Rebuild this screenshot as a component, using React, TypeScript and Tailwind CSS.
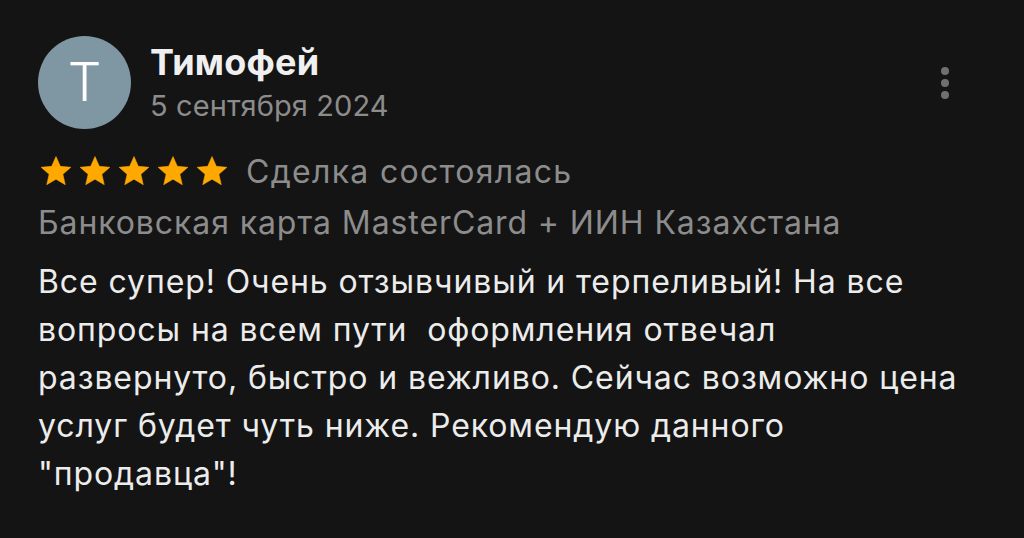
import React from "react";

const Star = () => (
  <svg width="34" height="34" viewBox="0 0 24 24" className="shrink-0">
    <path
      d="M12 1.8l3.05 6.9 7.45.68-5.64 4.95 1.67 7.33L12 17.8l-6.53 3.86 1.67-7.33L1.5 9.38l7.45-.68z"
      fill="#ffa900"
      stroke="#ffa900"
      strokeWidth="0.4"
      strokeLinejoin="round"
    />
  </svg>
);

export default function App() {
  return (
    <div
      className="w-[1024px] h-[538px] bg-[#141414] overflow-hidden pl-[38px] pr-[75px] pt-[36px]"
      style={{ fontFamily: "Inter, 'Noto Sans', sans-serif" }}
    >
      <div className="flex items-start">
        <div className="w-[93px] h-[93px] rounded-full bg-[#7e97a3] flex items-center justify-center shrink-0">
          <span className="text-[53px] font-light text-white leading-none">T</span>
        </div>
        <div className="ml-[19px] mt-[4px] flex flex-col">
          <div className="text-[36px] leading-[44px] font-bold text-[#f0f0f0] tracking-[0.2px]">Тимофей</div>
          <div className="mt-[2px] text-[29px] leading-[40px] text-[#8c8c8c] tracking-[0.1px]">5 сентября 2024</div>
        </div>
        <div className="ml-auto mt-[31px] flex flex-col gap-[4px] items-center w-[8px]">
          <span className="w-[8px] h-[8px] rounded-full bg-[#707070]" />
          <span className="w-[8px] h-[8px] rounded-full bg-[#707070]" />
          <span className="w-[8px] h-[8px] rounded-full bg-[#707070]" />
        </div>
      </div>
      <div className="mt-[19px] flex items-center h-[48px]">
        <div className="flex gap-[5px] ml-[1px] -mt-[2px]">
          <Star />
          <Star />
          <Star />
          <Star />
          <Star />
        </div>
        <span className="ml-[17px] text-[32px] leading-[48px] text-[#8c8c8c] tracking-[1.3px]">Сделка состоялась</span>
      </div>
      <div className="mt-[3px] text-[32px] leading-[48px] text-[#8c8c8c] whitespace-nowrap tracking-[0.9px]">
        Банковская карта MasterCard + ИИН Казахстана
      </div>
      <div className="mt-[11px] text-[32px] leading-[48px] text-[#ececec] whitespace-nowrap tracking-[0.9px]">
        Все супер! Очень отзывчивый и терпеливый! На все
        <br />
        вопросы на всем пути&nbsp; оформления отвечал
        <br />
        развернуто, быстро и вежливо. Сейчас возможно цена
        <br />
        услуг будет чуть ниже. Рекомендую данного
        <br />
        "продавца"!
      </div>
    </div>
  );
}
